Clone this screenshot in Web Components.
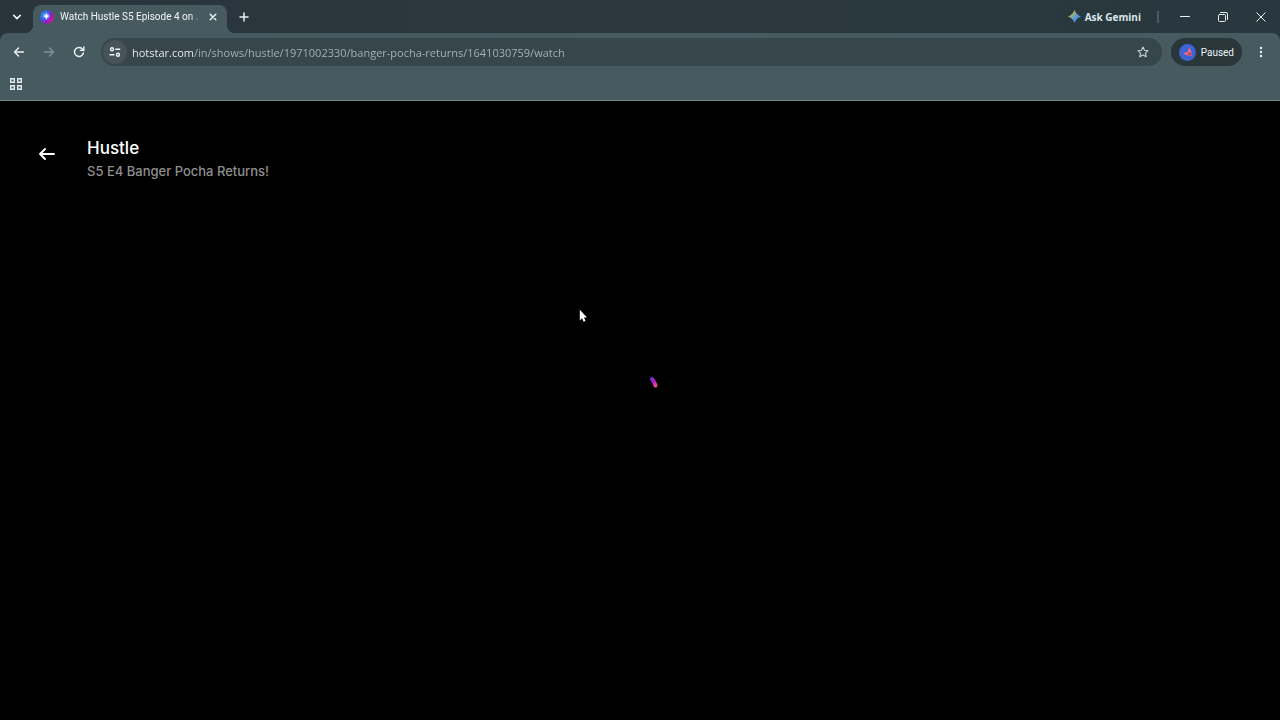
<!DOCTYPE html>
<html lang="en">
<head>
<meta charset="utf-8">
<title>Watch Hustle S5 Episode 4 on JioHotstar</title>
<style>
  html, body { margin: 0; height: 100%; background: #000; }
  body { font-family: "Open Sans", "Noto Sans", sans-serif; font-size: 12px; }
</style>
</head>
<body>
<app-window>
  <tab-strip slot="chrome">
    <browser-tab>Watch Hustle S5 Episode 4 on JioHotstar</browser-tab>
  </tab-strip>
  <tool-bar slot="chrome"></tool-bar>
  <bookmark-bar slot="chrome"></bookmark-bar>
  <video-page>
    <span slot="title">Hustle</span>
    <span slot="episode">S5 E4 Banger Pocha Returns!</span>
  </video-page>
  <mouse-pointer slot="overlay"></mouse-pointer>
</app-window>

<script>
const base = `
  *, :host { box-sizing: border-box; }
  button { border: 0; margin: 0; padding: 0; background: none; color: inherit; font: inherit;
    display: flex; align-items: center; justify-content: center; flex: none; }
  svg { display: block; flex: none; }
`;
const define = (name, css, html) => customElements.define(name, class extends HTMLElement {
  constructor() {
    super();
    this.attachShadow({ mode: "open" }).innerHTML = `<style>${base}${css}</style>${html}`;
  }
});
const stroke = 'fill="none" stroke="currentColor" stroke-linecap="round" stroke-linejoin="round"';

define("app-window", `
  :host { display: flex; flex-direction: column; min-height: 100vh; position: relative; background: #000; overflow: hidden; }
  header { flex: none; background: #29373d; border-bottom: 1px solid #728287; }
  main { flex: 1; display: flex; }
`, `<header><slot name="chrome"></slot></header><main><slot></slot></main><slot name="overlay"></slot>`);

define("tab-strip", `
  :host { display: flex; align-items: stretch; height: 33px; color: #e9f0f1; background: linear-gradient(90deg, #29343b, #2b393f 50%, #29383e); }
  .search { width: 33px; }
  .new { width: 34px; }
  .space { flex: 1; }
  .gemini { align-self: center; height: 24px; padding: 0 8px; gap: 4px; border-radius: 8px; background: #28383d; font-size: 10px; font-weight: 700; color: #dce6e8; }
  .rule { align-self: center; width: 2px; height: 12px; margin: 0 7px 0 8px; background: #4b5a60; }
  .win { width: 38px; }
`, `
  <button class="search" aria-label="Search tabs"><svg width="10" height="10" viewBox="0 0 10 10" ${stroke} stroke-width="1.6"><path d="M1.8 3.4 5 6.6l3.2-3.2"/></svg></button>
  <slot></slot>
  <button class="new" aria-label="New tab"><svg width="10" height="10" viewBox="0 0 10 10" ${stroke} stroke-width="1.5"><path d="M5 1v8M1 5h8"/></svg></button>
  <div class="space"></div>
  <button class="gemini"><svg width="13" height="13" viewBox="0 0 14 14"><defs><linearGradient id="g" x1="0" y1="0" x2="1" y2="1"><stop offset=".2" stop-color="#d8b64b"/><stop offset=".45" stop-color="#78a5a4"/><stop offset=".65" stop-color="#4b8ee8"/><stop offset="1" stop-color="#65bafa"/></linearGradient></defs><path fill="url(#g)" d="M7 0Q8.800 5.200 14 7 8.800 8.800 7 14 5.200 8.800 0 7 5.200 5.200 7 0Z"/></svg>Ask Gemini</button>
  <div class="rule"></div>
  <button class="win" aria-label="Minimize"><svg width="10" height="10" viewBox="0 0 10 10" ${stroke}><path d="M.5 4.5h9"/></svg></button>
  <button class="win" aria-label="Restore"><svg width="10" height="10" viewBox="0 0 10 10" ${stroke}><rect x=".5" y="2.5" width="7" height="7" rx="1"/><path d="M2.5.5H8A1.5 1.5 0 0 1 9.500 2v5.500"/></svg></button>
  <button class="win" aria-label="Close"><svg width="10" height="10" viewBox="0 0 10 10" ${stroke}><path d="m.7.7 8.600 8.600M9.300.7.7 9.300"/></svg></button>
`);

define("browser-tab", `
  :host { display: flex; align-items: center; position: relative; width: 194px; margin-top: 5px; padding: 0 8px 4px 7px; background: #465a60; border-radius: 8px 8px 0 0; color: #f0f5f6; font: 10px Roboto, sans-serif; }
  :host::before, :host::after { content: ""; position: absolute; bottom: 0; width: 8px; height: 8px; }
  :host::before { right: 100%; background: radial-gradient(circle at 0 0, transparent 8px, #465a60 8px); }
  :host::after { left: 100%; background: radial-gradient(circle at 100% 0, transparent 8px, #465a60 8px); }
  .title { flex: 1; min-width: 0; margin: 0 8px 0 6px; line-height: 16px; white-space: nowrap; overflow: hidden;
    mask-image: linear-gradient(90deg, #000 calc(100% - 8px), transparent); }
  button { width: 12px; height: 16px; }
`, `
  <svg width="14" height="14" viewBox="0 0 14 14"><defs><linearGradient id="f" x1="0" y1=".1" x2="1" y2=".8"><stop stop-color="#1d9af0"/><stop offset=".35" stop-color="#3757f0"/><stop offset=".65" stop-color="#9419c8"/><stop offset="1" stop-color="#e51383"/></linearGradient><radialGradient id="h"><stop stop-color="#8cf0ff"/><stop offset="1" stop-color="#35a5ff" stop-opacity="0"/></radialGradient></defs><circle cx="7" cy="7" r="6.800" fill="url(#f)"/><circle cx="6" cy="6" r="5" fill="url(#h)"/><path fill="#fff" d="M6.500 3q.3 2.700 3 3-2.700.5-3 3.500-.3-3-3-3.500 2.700-.3 3-3Z"/></svg>
  <span class="title"><slot></slot></span>
  <button aria-label="Close tab"><svg width="8" height="8" viewBox="0 0 8 8" ${stroke} stroke-width="1.4"><path d="m1.200 1.200 5.600 5.600M6.800 1.200 1.200 6.800"/></svg></button>
`);

define("tool-bar", `
  :host { display: flex; align-items: center; height: 38px; padding: 0 4px; background: #465a60; border-radius: 8px 8px 0 0; color: #edf4f5; }
  .nav { width: 30px; height: 28px; }
  .off { color: #829297; }
  .omnibox { flex: 1; min-width: 0; display: flex; align-items: center; height: 28px; margin: 0 9px 0 7px; padding: 0 9px 0 2px; border-radius: 14px; background: #37464a; }
  .site { width: 24px; height: 24px; border-radius: 50%; background: #46545a; }
  input { flex: 1; min-width: 0; margin: 0 8px 0 5px; padding: 0; border: 0; outline: 0; height: 20px; font: 11px "Open Sans", sans-serif;
    color: transparent; background: linear-gradient(90deg, #f1f6f6 62px, #a9b6b9 62px); background-clip: text; -webkit-background-clip: text; }
  .star { width: 20px; height: 20px; color: #c9d3d5; }
  .profile { height: 28px; margin-right: 4px; padding: 0 8px; gap: 5px; border-radius: 14px; background: #29363a; font: 10px Roboto, sans-serif; }
  .more { width: 30px; height: 28px; }
`, `
  <button class="nav" aria-label="Back"><svg width="12" height="12" viewBox="0 0 12 12" ${stroke} stroke-width="1.4"><path d="M10.500 6h-9M5.500 2l-4 4 4 4"/></svg></button>
  <button class="nav off" aria-label="Forward"><svg width="12" height="12" viewBox="0 0 12 12" ${stroke} stroke-width="1.300"><path d="M1.500 6h9M6.500 2l4 4-4 4"/></svg></button>
  <button class="nav" aria-label="Reload"><svg width="12" height="12" viewBox="0 0 12 12" ${stroke} stroke-width="1.400"><path d="M10.400 7A4.500 4.500 0 1 1 9.700 3.400l1 1M10.800 1v3.400H7.400"/></svg></button>
  <div class="omnibox">
    <button class="site" aria-label="View site information"><svg width="12" height="12" viewBox="0 0 12 12" ${stroke} stroke-width="1.400"><circle cx="3" cy="3.300" r="1.500"/><path d="M6.800 3.300h4M1 8.700h4"/><circle cx="9" cy="8.700" r="1.500"/></svg></button>
    <input type="text" aria-label="Address and search bar" spellcheck="false" value="hotstar.com/in/shows/hustle/1971002330/banger-pocha-returns/1641030759/watch">
    <button class="star" aria-label="Bookmark this tab"><svg width="12" height="12" viewBox="0 0 12 12" ${stroke} stroke-width="1.100"><path d="m6 1 1.500 3.300 3.600.4-2.700 2.400.8 3.600L6 8.900l-3.200 1.800.8-3.600L.9 4.700l3.600-.4Z"/></svg></button>
  </div>
  <button class="profile"><svg width="17" height="17" viewBox="0 0 17 17"><circle cx="8.500" cy="8.500" r="8.500" fill="#3e63d2"/><path fill="#ef6c83" d="m10.500 3.500 2.200 5.200.6 3.300-4.300-.6-5-1.600L8.600 7.500Z"/><path fill="#b8486f" d="m8.600 8 4.100.7.3 3-4-.6Z"/></svg>Paused</button>
  <button class="more" aria-label="More"><svg width="4" height="12" viewBox="0 0 4 12" fill="currentColor"><circle cx="2" cy="2" r="1.200"/><circle cx="2" cy="6" r="1.200"/><circle cx="2" cy="10" r="1.200"/></svg></button>
`);

define("bookmark-bar", `
  :host { display: flex; height: 29px; padding: 0 4px; background: #465a60; color: #e3ebec; }
  button { width: 24px; height: 26px; }
`, `<button aria-label="Apps"><svg width="12" height="12" viewBox="0 0 12 12" fill="none" stroke="currentColor" stroke-width="1.400"><path d="M.7.700h3.600v3.600H.7ZM7.700.700h3.600v3.600H7.700ZM.7 7.700h3.600v3.600H.7ZM7.700 7.700h3.600v3.600H7.700Z"/></svg></button>`);

define("video-page", `
  :host { flex: 1; display: grid; grid-template-rows: auto 1fr; position: relative; padding: 35px 36px; color: #fff; font-family: Inter, sans-serif; }
  .head { display: flex; align-items: flex-start; gap: 30px; }
  .head button { width: 21px; height: 36px; }
  h1 { margin: 0; font-size: 17px; line-height: 24px; font-weight: 500; }
  p { margin: 0; font-size: 13px; line-height: 22px; font-weight: 500; color: #8f8f8f; }
  .loader { position: absolute; inset: 0; display: grid; place-items: center; }
  .loader svg { overflow: visible; }
`, `
  <div class="loader" role="status" aria-label="Loading"><svg width="56" height="56" viewBox="0 0 56 56"><defs><linearGradient id="l" gradientUnits="userSpaceOnUse" x1="39" y1="-5" x2="44" y2="3"><stop stop-color="#6833cf"/><stop offset=".5" stop-color="#b31bc3"/><stop offset="1" stop-color="#f04aa0"/></linearGradient></defs><path d="M40-4Q42-2 43.500 2.500" fill="none" stroke="url(#l)" stroke-width="4" stroke-linecap="round"/></svg></div>
  <div class="head">
    <button aria-label="Go back"><svg width="18" height="14" viewBox="0 0 18 14" ${stroke} stroke-width="1.900"><path d="M16 7H2M7 2 2 7l5 5"/></svg></button>
    <div><h1><slot name="title"></slot></h1><p><slot name="episode"></slot></p></div>
  </div>
`);

define("mouse-pointer", `
  :host { position: absolute; left: 579px; top: 309px; pointer-events: none; }
`, `<svg width="9" height="14" viewBox="0 0 9 14"><path fill="#fff" d="M.800.800v10.700l2.300-2.200 1.500 3.500 1.900-.8L5 8.600h3Z"/></svg>`);
</script>
</body>
</html>
